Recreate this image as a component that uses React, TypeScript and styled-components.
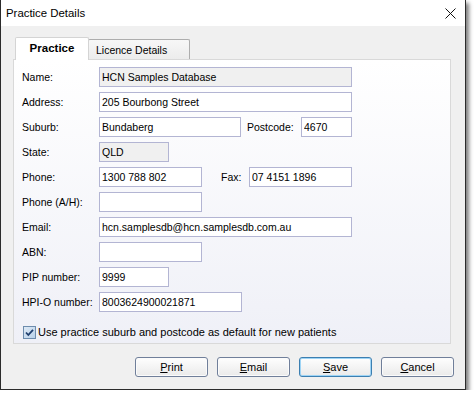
import React from "react";
import styled, { createGlobalStyle } from "styled-components";

const Global = createGlobalStyle`
  html, body { margin: 0; padding: 0; background: #ffffff; }
  body { font-family: "Liberation Sans", Arial, sans-serif; font-size: 10.5px; color: #000; }
  * { box-sizing: border-box; }
`;

const Window = styled.div`
  width: 466px;
  height: 390px;
  border: 1px solid #2b2b2b;
  border-top: none;
  background: #f0f0f0;
  display: flex;
  flex-direction: column;
  box-shadow: 3px 3px 4px rgba(0, 0, 0, 0.5);
`;

const TitleBar = styled.div`
  height: 26px;
  background: #ffffff;
  display: flex;
  align-items: center;
  justify-content: space-between;
  padding: 0 9px 0 5px;
  font-size: 11.4px;
  color: #000;
`;

const Body = styled.div`
  flex: 1;
  display: flex;
  flex-direction: column;
  padding: 11px 0 0 12px;
`;

const TabStrip = styled.div`
  display: flex;
  align-items: flex-end;
  height: 22px;
  padding-left: 2px;
`;

const Tab = styled.div<{ $active?: boolean }>`
  position: relative;
  display: flex;
  align-items: center;
  justify-content: ${(p) => (p.$active ? "center" : "flex-start")};
  padding-left: ${(p) => (p.$active ? "0" : "7px")};
  border: 1px solid ${(p) => (p.$active ? "#d4d4d4" : "#adadad")};
  border-bottom: none;
  border-radius: 2px 2px 0 0;
  background: ${(p) => (p.$active ? "#ffffff" : "linear-gradient(#f7f7f7, #ececec)")};
  width: ${(p) => (p.$active ? "74px" : "102px")};
  height: ${(p) => (p.$active ? "23px" : "20px")};
  margin-bottom: ${(p) => (p.$active ? "-1px" : "0")};
  margin-left: ${(p) => (p.$active ? "0" : "-1px")};
  z-index: ${(p) => (p.$active ? 1 : 0)};
  font-size: ${(p) => (p.$active ? "11.5px" : "10.5px")};
  font-weight: ${(p) => (p.$active ? 700 : 400)};
  padding-bottom: ${(p) => (p.$active ? "3px" : "0")};
`;

const Panel = styled.div`
  height: 285px;
  margin-right: 14px;
  border: 1px solid #d9d9d9;
  background: linear-gradient(#ffffff, #eff0f7);
  padding: 7px 8px 0 8px;
  display: flex;
  flex-direction: column;
  gap: 5px;
`;

const Row = styled.div`
  display: flex;
  align-items: center;
  height: 20px;
`;

const Label = styled.span<{ $w?: number; $ml?: number }>`
  width: ${(p) => p.$w ?? 77}px;
  margin-left: ${(p) => p.$ml ?? 0}px;
  flex-shrink: 0;
  white-space: nowrap;
`;

const Field = styled.input<{ $w: number; $grey?: boolean }>`
  width: ${(p) => p.$w}px;
  height: 20px;
  border: 1px solid #b3b5d3;
  background: ${(p) => (p.$grey ? "#f0f0f0" : "#ffffff")};
  font-family: "Liberation Sans", Arial, sans-serif;
  font-size: 10.5px;
  color: #000;
  padding: 0 2px;
  margin: 0;
  outline: none;
`;

const CheckRow = styled.label`
  display: flex;
  align-items: center;
  height: 20px;
  margin-top: 5px;
  gap: 2px;
  margin-left: 1px;
  font-size: 11px;
  white-space: nowrap;
`;

const ButtonBar = styled.div`
  display: flex;
  justify-content: flex-end;
  gap: 9px;
  padding-right: 11px;
  margin-top: 13px;
`;

const Button = styled.button<{ $default?: boolean }>`
  width: 73px;
  height: 20px;
  border: 1px solid ${(p) => (p.$default ? "#3c7fb1" : "#707f9a")};
  border-radius: 3px;
  background: linear-gradient(#fefefe, #eaeaea);
  box-shadow: ${(p) => (p.$default ? "inset 0 0 0 1px #9ed4f5" : "inset 0 0 0 1px #fbfbfb")};
  font-family: "Liberation Sans", Arial, sans-serif;
  font-size: 11px;
  color: #000;
  padding: 0;
  u { text-decoration: underline; }
`;

const CloseIcon = () => (
  <svg width="11" height="11" viewBox="0 0 11 11">
    <path d="M0.5 0.5 L10.5 10.5 M10.5 0.5 L0.5 10.5" stroke="#111" strokeWidth="1" fill="none" />
  </svg>
);

const CheckIcon = () => (
  <svg width="13" height="13" viewBox="0 0 13 13">
    <defs>
      <linearGradient id="cbg" x1="0" y1="0" x2="1" y2="1">
        <stop offset="0" stopColor="#dfeaf6" />
        <stop offset="1" stopColor="#b7d0ea" />
      </linearGradient>
    </defs>
    <rect x="0.5" y="0.5" width="12" height="12" fill="url(#cbg)" stroke="#6d8cad" />
    <path d="M3 6.5 L5.3 9 L10 3.8" stroke="#1f3f6e" strokeWidth="1.8" fill="none" />
  </svg>
);

export default function App() {
  return (
    <>
      <Global />
      <Window>
        <TitleBar>
          <span>Practice Details</span>
          <CloseIcon />
        </TitleBar>
        <Body>
          <TabStrip>
            <Tab $active>Practice</Tab>
            <Tab>Licence Details</Tab>
          </TabStrip>
          <Panel>
            <Row>
              <Label>Name:</Label>
              <Field $w={253} $grey readOnly value="HCN Samples Database" />
            </Row>
            <Row>
              <Label>Address:</Label>
              <Field $w={253} readOnly value="205 Bourbong Street" />
            </Row>
            <Row>
              <Label>Suburb:</Label>
              <Field $w={142} readOnly value="Bundaberg" />
              <Label $w={54} $ml={6}>Postcode:</Label>
              <Field $w={51} readOnly value="4670" />
            </Row>
            <Row>
              <Label>State:</Label>
              <Field $w={70} $grey readOnly value="QLD" />
            </Row>
            <Row>
              <Label>Phone:</Label>
              <Field $w={103} readOnly value="1300 788 802" />
              <Label $w={28} $ml={19}>Fax:</Label>
              <Field $w={103} readOnly value="07 4151 1896" />
            </Row>
            <Row>
              <Label>Phone (A/H):</Label>
              <Field $w={103} readOnly value="" />
            </Row>
            <Row>
              <Label>Email:</Label>
              <Field $w={253} readOnly value="hcn.samplesdb@hcn.samplesdb.com.au" />
            </Row>
            <Row>
              <Label>ABN:</Label>
              <Field $w={103} readOnly value="" />
            </Row>
            <Row>
              <Label>PIP number:</Label>
              <Field $w={70} readOnly value="9999" />
            </Row>
            <Row>
              <Label>HPI-O number:</Label>
              <Field $w={143} readOnly value="8003624900021871" />
            </Row>
            <CheckRow>
              <CheckIcon />
              <span>Use practice suburb and postcode as default for new patients</span>
            </CheckRow>
          </Panel>
          <ButtonBar>
            <Button><u>P</u>rint</Button>
            <Button><u>E</u>mail</Button>
            <Button $default><u>S</u>ave</Button>
            <Button><u>C</u>ancel</Button>
          </ButtonBar>
        </Body>
      </Window>
    </>
  );
}
